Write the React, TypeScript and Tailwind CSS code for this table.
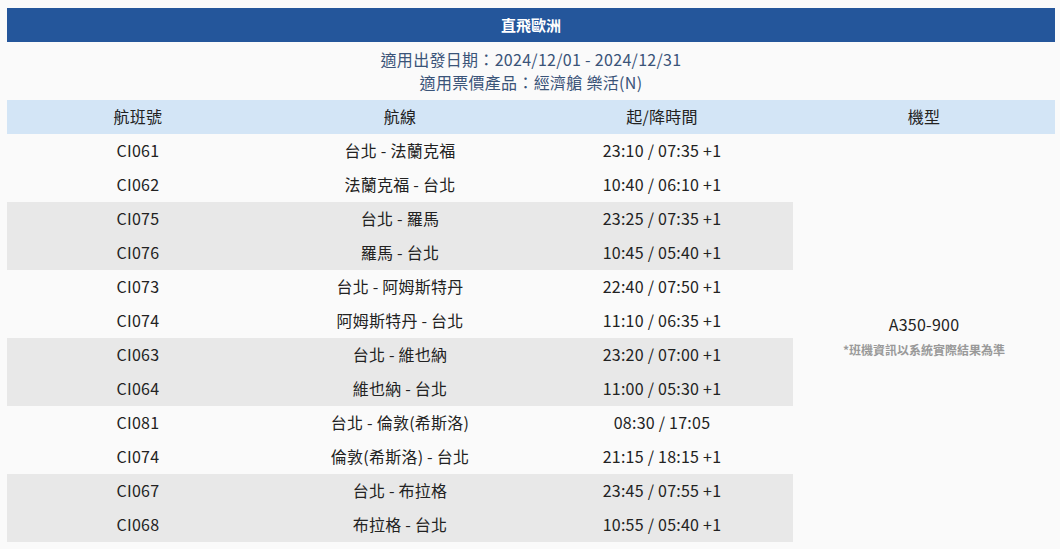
import React from "react";

const rows: [string, string, string, boolean][] = [
  ["CI061", "台北 - 法蘭克福", "23:10 / 07:35 +1", false],
  ["CI062", "法蘭克福 - 台北", "10:40 / 06:10 +1", false],
  ["CI075", "台北 - 羅馬", "23:25 / 07:35 +1", true],
  ["CI076", "羅馬 - 台北", "10:45 / 05:40 +1", true],
  ["CI073", "台北 - 阿姆斯特丹", "22:40 / 07:50 +1", false],
  ["CI074", "阿姆斯特丹 - 台北", "11:10 / 06:35 +1", false],
  ["CI063", "台北 - 維也納", "23:20 / 07:00 +1", true],
  ["CI064", "維也納 - 台北", "11:00 / 05:30 +1", true],
  ["CI081", "台北 - 倫敦(希斯洛)", "08:30 / 17:05", false],
  ["CI074", "倫敦(希斯洛) - 台北", "21:15 / 18:15 +1", false],
  ["CI067", "台北 - 布拉格", "23:45 / 07:55 +1", true],
  ["CI068", "布拉格 - 台北", "10:55 / 05:40 +1", true],
];

export default function App() {
  return (
    <div
      className="min-h-[549px] w-full bg-[#fafafa] pt-[8px] pl-[7px] pr-[5px] text-[#222]"
      style={{ fontFamily: '"Segoe UI", "Noto Sans CJK TC", "Noto Sans", sans-serif' }}
    >
      <div className="w-[1048px]">
        <div className="flex h-[34px] items-center justify-center bg-[#24569b] text-[15px] font-bold text-white">
          直飛歐洲
        </div>
        <div className="flex h-[58px] flex-col items-center justify-center pb-[1px] text-[16px] leading-[23px] tracking-[0.3px] text-[#3a5479]">
          <div>適用出發日期：2024/12/01 - 2024/12/31</div>
          <div>適用票價產品：經濟艙 樂活(N)</div>
        </div>
        <table className="w-full table-fixed border-collapse text-[16px] tracking-[0.25px]">
          <thead>
            <tr className="h-[34px] bg-[#d3e5f6]">
              <th className="pb-[2px] font-normal">航班號</th>
              <th className="pb-[2px] font-normal">航線</th>
              <th className="pb-[2px] font-normal">起/降時間</th>
              <th className="pb-[2px] font-normal">機型</th>
            </tr>
          </thead>
          <tbody>
            {rows.map((r, i) => (
              <tr key={i} className="h-[34px]">
                <td className={`pb-[3px] text-center ${r[3] ? "bg-[#e8e8e8]" : ""}`}>{r[0]}</td>
                <td className={`pb-[3px] text-center ${r[3] ? "bg-[#e8e8e8]" : ""}`}>{r[1]}</td>
                <td className={`pb-[3px] text-center ${r[3] ? "bg-[#e8e8e8]" : ""}`}>{r[2]}</td>
                {i === 0 && (
                  <td rowSpan={12} className="pb-[4px] text-center align-middle">
                    <div className="text-[16px] leading-[22px]">A350-900</div>
                    <div className="mt-[6px] text-[12px] font-bold tracking-normal text-[#999]">*班機資訊以系統實際結果為準</div>
                  </td>
                )}
              </tr>
            ))}
          </tbody>
        </table>
      </div>
    </div>
  );
}
